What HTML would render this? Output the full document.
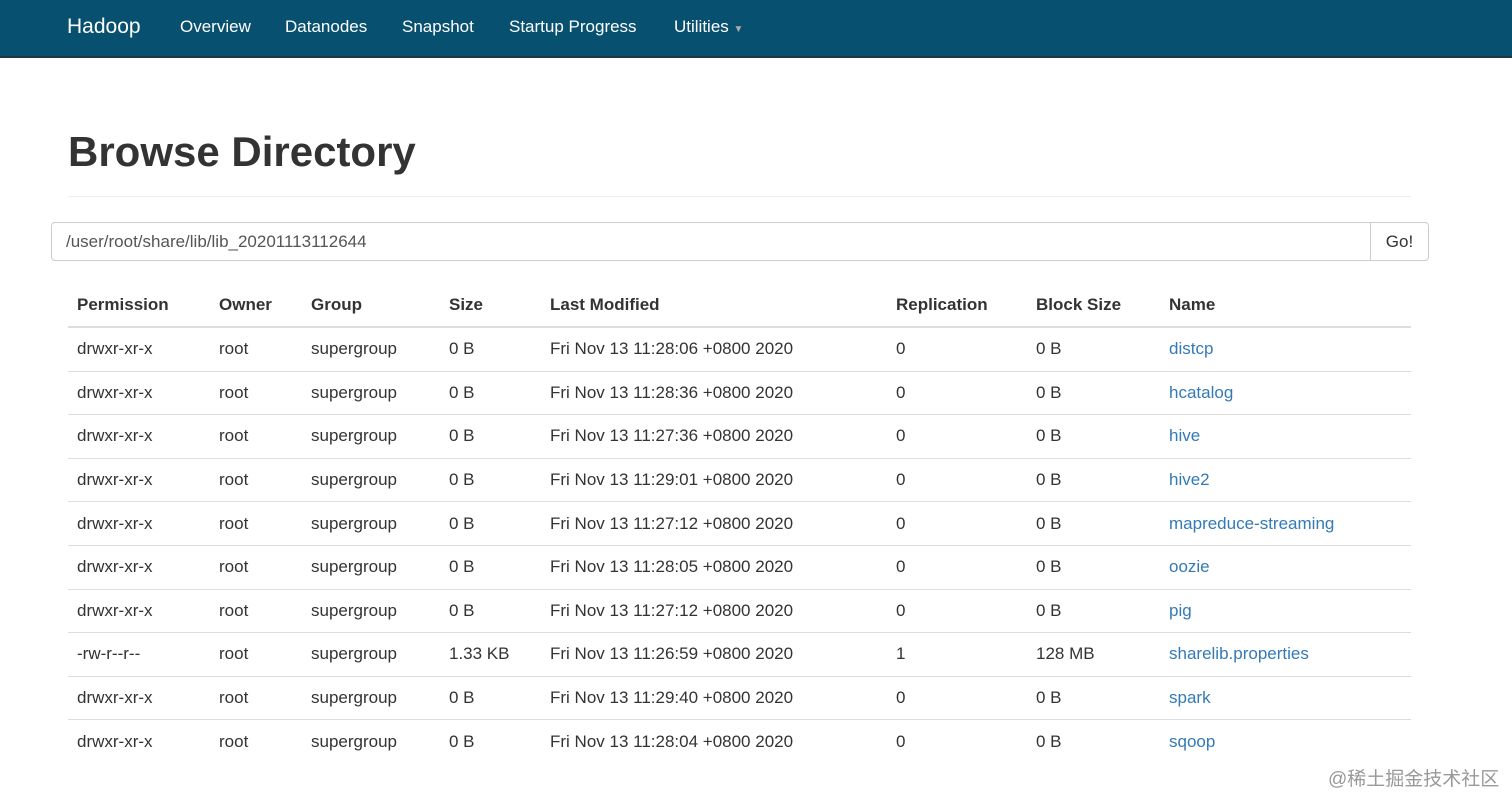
<!DOCTYPE html>
<html><head><meta charset="utf-8"><style>
body{margin:0;background:#fff;font-family:"Liberation Sans",Arial,sans-serif;color:#333;width:1512px;height:807px;overflow:hidden;position:relative}
.nav{height:56px;background:#07506f;border-bottom:2px solid #1e3a40;position:relative}
.nav span{position:absolute;top:17px;color:#fff;font-size:17px}
.nav .brand{font-size:21px;top:15px}
h1{position:absolute;left:68px;top:128px;margin:0;font-size:42px;font-weight:bold;color:#333}
.hr{position:absolute;left:68px;width:1343px;top:196px;border-top:1px solid #eee}
.inp{position:absolute;left:51px;top:222px;width:1376px;height:37px;border:1px solid #ccc;border-radius:4px}
.inp .t{position:absolute;left:14px;top:9px;font-size:17px;color:#555}
.inp .go{position:absolute;right:0;top:0;width:57px;height:37px;border-left:1px solid #ccc;font-size:17px;line-height:37px;text-align:center;color:#333}
table{position:absolute;left:68px;top:284px;width:1343px;border-collapse:collapse;font-size:17px}
th{text-align:left;font-weight:bold;padding:0 9px;height:42px;border-bottom:2px solid #ddd}
td{padding:0 9px;height:42.6px;border-bottom:1px solid #ddd}
td a{color:#337ab7;text-decoration:none}
.wm{position:absolute;left:1328px;top:764px;font-size:19px;color:#999;font-family:"Liberation Sans","Noto Sans CJK SC",sans-serif}
</style></head><body>
<div class="nav">
<span class="brand" style="left:67px">Hadoop</span>
<span style="left:180px">Overview</span>
<span style="left:285px">Datanodes</span>
<span style="left:402px">Snapshot</span>
<span style="left:509px">Startup Progress</span>
<span style="left:674px">Utilities <small style="color:#aaa;font-size:10px">&#9660;</small></span>
</div>
<h1>Browse Directory</h1>
<div class="hr"></div>
<div class="inp"><div class="t">/user/root/share/lib/lib_20201113112644</div><div class="go">Go!</div></div>
<table>
<colgroup><col style="width:142px"><col style="width:92px"><col style="width:138px"><col style="width:101px"><col style="width:346px"><col style="width:140px"><col style="width:133px"><col></colgroup>
<tr><th>Permission</th><th>Owner</th><th>Group</th><th>Size</th><th>Last Modified</th><th>Replication</th><th>Block Size</th><th>Name</th></tr>
<tr><td>drwxr-xr-x</td><td>root</td><td>supergroup</td><td>0 B</td><td>Fri Nov 13 11:28:06 +0800 2020</td><td>0</td><td>0 B</td><td><a>distcp</a></td></tr>
<tr><td>drwxr-xr-x</td><td>root</td><td>supergroup</td><td>0 B</td><td>Fri Nov 13 11:28:36 +0800 2020</td><td>0</td><td>0 B</td><td><a>hcatalog</a></td></tr>
<tr><td>drwxr-xr-x</td><td>root</td><td>supergroup</td><td>0 B</td><td>Fri Nov 13 11:27:36 +0800 2020</td><td>0</td><td>0 B</td><td><a>hive</a></td></tr>
<tr><td>drwxr-xr-x</td><td>root</td><td>supergroup</td><td>0 B</td><td>Fri Nov 13 11:29:01 +0800 2020</td><td>0</td><td>0 B</td><td><a>hive2</a></td></tr>
<tr><td>drwxr-xr-x</td><td>root</td><td>supergroup</td><td>0 B</td><td>Fri Nov 13 11:27:12 +0800 2020</td><td>0</td><td>0 B</td><td><a>mapreduce-streaming</a></td></tr>
<tr><td>drwxr-xr-x</td><td>root</td><td>supergroup</td><td>0 B</td><td>Fri Nov 13 11:28:05 +0800 2020</td><td>0</td><td>0 B</td><td><a>oozie</a></td></tr>
<tr><td>drwxr-xr-x</td><td>root</td><td>supergroup</td><td>0 B</td><td>Fri Nov 13 11:27:12 +0800 2020</td><td>0</td><td>0 B</td><td><a>pig</a></td></tr>
<tr><td>-rw-r--r--</td><td>root</td><td>supergroup</td><td>1.33 KB</td><td>Fri Nov 13 11:26:59 +0800 2020</td><td>1</td><td>128 MB</td><td><a>sharelib.properties</a></td></tr>
<tr><td>drwxr-xr-x</td><td>root</td><td>supergroup</td><td>0 B</td><td>Fri Nov 13 11:29:40 +0800 2020</td><td>0</td><td>0 B</td><td><a>spark</a></td></tr>
<tr><td style="border:none">drwxr-xr-x</td><td style="border:none">root</td><td style="border:none">supergroup</td><td style="border:none">0 B</td><td style="border:none">Fri Nov 13 11:28:04 +0800 2020</td><td style="border:none">0</td><td style="border:none">0 B</td><td style="border:none"><a>sqoop</a></td></tr>
</table>
<div class="wm">@稀土掘金技术社区</div>
</body></html>
